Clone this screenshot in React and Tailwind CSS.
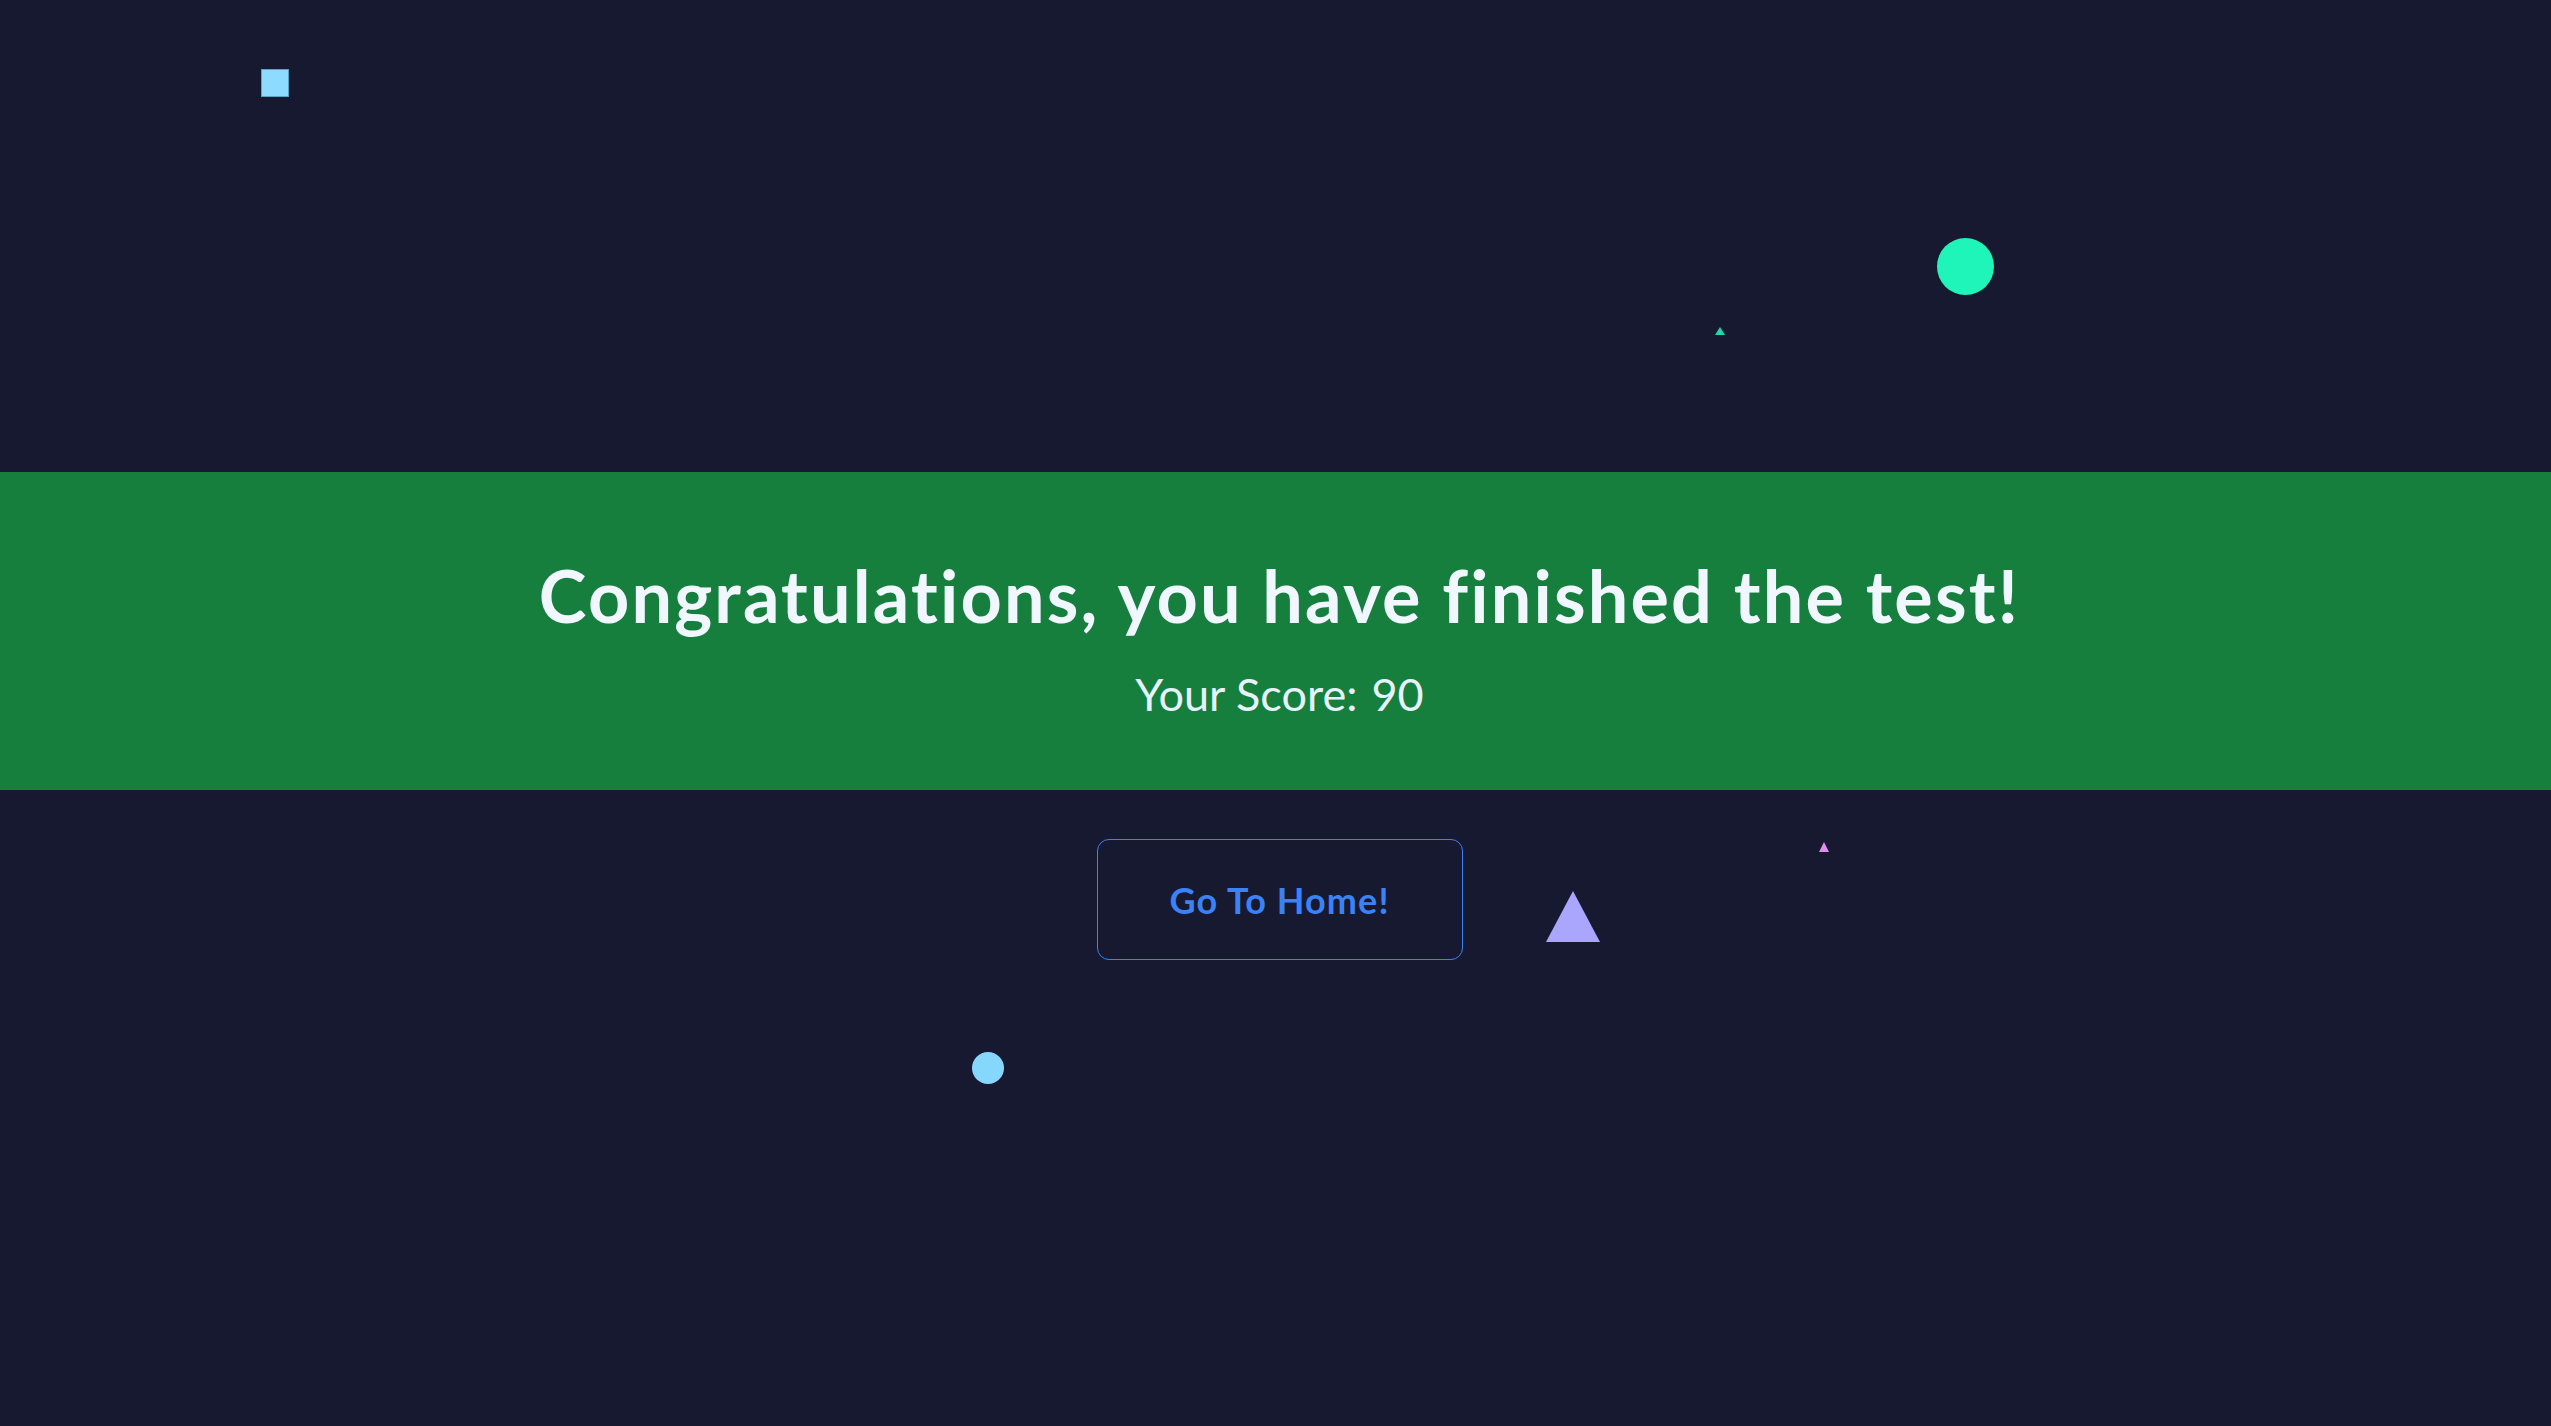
import React from "react";

const shapes = [
  { cls: "left-[261px] top-[69px] w-[28px] h-[28px] bg-[#8ddbfe] border border-[#5aa3c4]" },
  { cls: "left-[1937px] top-[238px] w-[57px] h-[57px] rounded-full bg-[#1ff5b9]" },
  { cls: "left-[972px] top-[1052px] w-[32px] h-[32px] rounded-full bg-[#86d7fc]" },
];

const Triangle = ({ className, color }) => (
  <svg className={"absolute " + className} viewBox="0 0 10 10" preserveAspectRatio="none">
    <polygon points="5,0 10,10 0,10" fill={color} />
  </svg>
);

const ResultPage = ({ score = 90, onHome }) => {
  return (
    <div className="relative min-h-screen w-full overflow-hidden bg-[#161930] select-none font-['Segoe_UI','Lato','Open_Sans',sans-serif] [font-variant-ligatures:none]">
      {shapes.map((s, i) => (
        <div key={i} className={"absolute " + s.cls} />
      ))}
      <Triangle className="left-[1715px] top-[327px] w-[10px] h-[8px]" color="#1ad9a8" />
      <Triangle className="left-[1819px] top-[842px] w-[10px] h-[10px]" color="#e08cf0" />
      <Triangle className="left-[1546px] top-[891px] w-[54px] h-[51px]" color="#aaa6fd" />

      <div className="h-[472px]" />
      <div className="bg-[#177f3e] h-[318px] flex flex-col items-center pt-[87px] pl-[8px] text-[#f0f7ff]">
        <h1 className="text-[72px] leading-none font-bold tracking-[0.03em]">Congratulations, you have finished the test!</h1>
        <p className="mt-[41px] text-[45px] leading-none text-[#e6f3fb]">
          <span>Your Score:</span>
          <span className="ml-[14px]">{score}</span>
        </p>
      </div>
      <div className="flex justify-center pt-[49px] pl-[8px]">
        <button
          onClick={onHome}
          className="w-[366px] h-[121px] rounded-xl border border-[#3b82f6] text-[#3b82f6] text-[36px] font-bold tracking-[0.03em] cursor-pointer"
        >
          Go To Home!
        </button>
      </div>
    </div>
  );
};

export default function App() {
  return <ResultPage score={90} onHome={() => {}} />;
}
